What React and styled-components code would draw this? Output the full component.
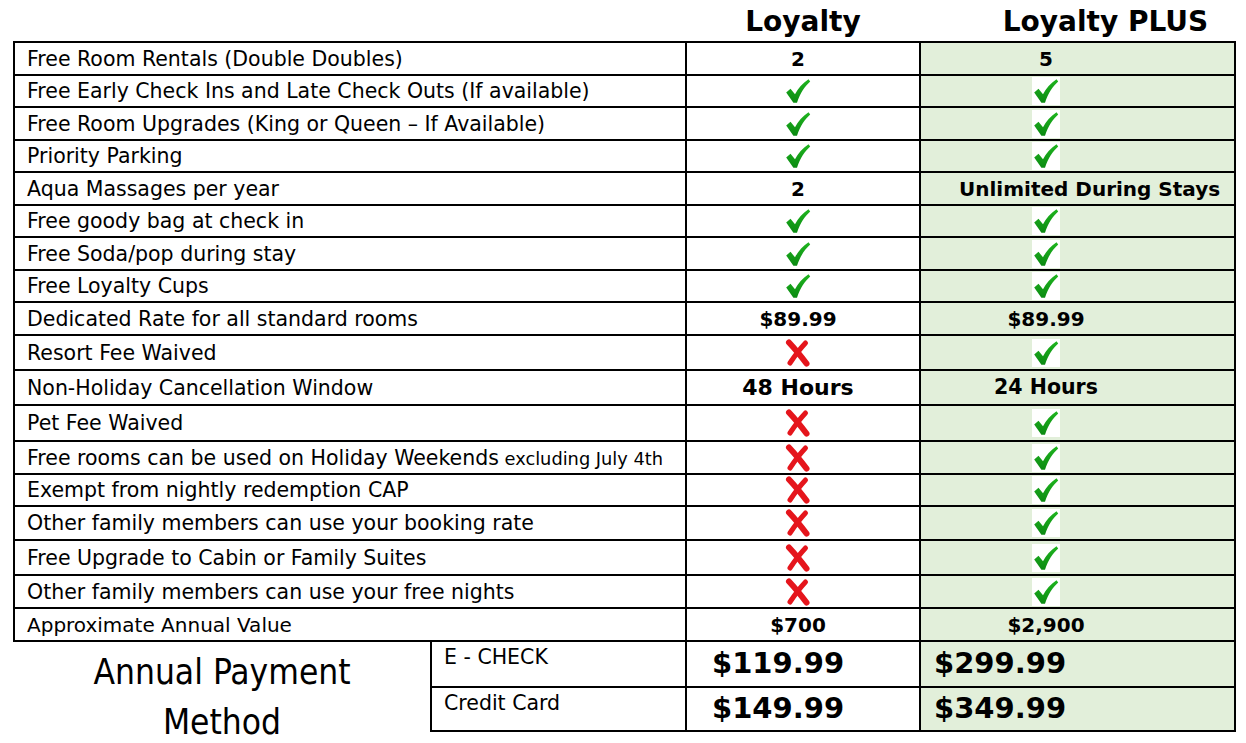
import React from 'react';
import styled, { createGlobalStyle } from 'styled-components';

const GlobalStyle = createGlobalStyle`
  html, body { margin: 0; padding: 0; background: #fff; }
  body {
    font-family: "DejaVu Sans", "Liberation Sans", sans-serif;
    color: #000;
  }
`;

const Page = styled.div`
  width: 1246px;
  height: 743px;
  overflow: hidden;
  padding-left: 13px;
  box-sizing: border-box;
`;

const Table = styled.table`
  border-collapse: collapse;
  table-layout: fixed;
  width: 1222px;
`;

const Row = styled.tr`
  height: ${(p) => p.$h}px;
`;

const HeadBlank = styled.th`
  border: none;
  padding: 0;
`;

const HeadCell = styled.th`
  border: none;
  padding: 2px 0 0 ${(p) => p.$shift || 0}px;
  font-weight: bold;
  font-size: 28px;
  text-align: center;
  vertical-align: middle;
  line-height: 1;
  white-space: nowrap;
`;

const Label = styled.td`
  border: 2px solid #000;
  padding: 0 0 0 12px;
  font-size: ${(p) => p.$size || 20.5}px;
  white-space: nowrap;
  vertical-align: middle;
  overflow: hidden;
`;

const Small = styled.span`
  font-size: 17.8px;
`;

const Value = styled.td`
  border: 2px solid #000;
  background: ${(p) => (p.$plus ? '#e2efda' : '#fff')};
  padding: ${(p) => p.$pad};
  text-align: ${(p) => p.$align || 'center'};
  vertical-align: middle;
  font-weight: bold;
  font-size: ${(p) => p.$size || 20}px;
  white-space: nowrap;
  line-height: 1;
`;

const IconBox = styled.span`
  display: inline-flex;
  align-items: center;
  justify-content: center;
  width: 28px;
  height: 28px;
  background: ${(p) => (p.$boxed ? '#fff' : 'transparent')};
  vertical-align: middle;
`;

const PaymentTitle = styled.td`
  border: none;
  padding: 0;
  vertical-align: top;
`;

const TitleText = styled.div`
  height: 89px;
  padding-top: 5px;
  box-sizing: border-box;
  font-family: "DejaVu Sans Condensed", "DejaVu Sans", sans-serif;
  font-size: 35px;
  line-height: 50px;
  text-align: center;
  white-space: nowrap;
  overflow: visible;
`;

const PayLabel = styled.td`
  border: 2px solid #000;
  padding: 4px 0 0 12px;
  vertical-align: top;
  font-size: 20.5px;
  line-height: 1.1;
  white-space: nowrap;
`;

const Price = styled.td`
  border: 2px solid #000;
  background: ${(p) => (p.$plus ? '#e2efda' : '#fff')};
  padding-left: ${(p) => p.$left}px;
  vertical-align: middle;
  font-weight: bold;
  font-size: 29px;
  line-height: 1;
  white-space: nowrap;
`;

const Check = () => (
  <svg width="26" height="26" viewBox="0 0 26 26">
    <defs>
      <linearGradient id="chkGrad" x1="0" y1="0" x2="0" y2="1">
        <stop offset="0" stopColor="#1fb51f" />
        <stop offset="1" stopColor="#0b8a12" />
      </linearGradient>
    </defs>
    <path
      d="M1.2 14.5 L5.5 10.8 L10 16.3 C13 10.3 17.5 5.3 23.5 1.2 L25.2 3.6 C19.8 8.6 15.2 15 12 24.8 L8.4 24.8 Z"
      fill="url(#chkGrad)"
    />
  </svg>
);

const Cross = () => (
  <svg width="28" height="28" viewBox="0 0 28 28">
    <path d="M5 3.5 Q 13 12 22.5 24.5" stroke="#e5151c" strokeWidth="6" strokeLinecap="round" fill="none" />
    <path d="M21.5 4 Q 14 12 6 24" stroke="#e5151c" strokeWidth="5" strokeLinecap="round" fill="none" />
  </svg>
);

const LOY_PAD = '0 10px 0 0';
const PLUS_PAD = '0 63px 0 0';

const rows = [
  { h: 33, label: 'Free Room Rentals (Double Doubles)', a: '2', b: '5' },
  { h: 32, label: 'Free Early Check Ins and Late Check Outs (If available)', a: 'check', b: 'check' },
  { h: 33, label: 'Free Room Upgrades (King or Queen \u2013 If Available)', a: 'check', b: 'check' },
  { h: 32, label: 'Priority Parking', a: 'check', b: 'check' },
  { h: 33, label: 'Aqua Massages per year', a: '2', b: 'Unlimited During Stays', bWide: true },
  { h: 32, label: 'Free goody bag at check in', a: 'check', b: 'check' },
  { h: 33, label: 'Free Soda/pop during stay', a: 'check', b: 'check' },
  { h: 32, label: 'Free Loyalty Cups', a: 'check', b: 'check' },
  { h: 33, label: 'Dedicated Rate for all standard rooms', a: '$89.99', b: '$89.99' },
  { h: 35, label: 'Resort Fee Waived', a: 'cross', b: 'check' },
  { h: 35, label: 'Non-Holiday Cancellation Window', a: '48 Hours', aSize: 22, b: '24 Hours', bSize: 20.5 },
  { h: 36, label: 'Pet Fee Waived', a: 'cross', b: 'check' },
  { h: 33, label: 'Free rooms can be used on Holiday Weekends', small: ' excluding July 4th', a: 'cross', b: 'check' },
  { h: 32, label: 'Exempt from nightly redemption CAP', a: 'cross', b: 'check' },
  { h: 34, label: 'Other family members can use your booking rate', a: 'cross', b: 'check' },
  { h: 35, label: 'Free Upgrade to Cabin or Family Suites', a: 'cross', b: 'check' },
  { h: 33, label: 'Other family members can use your free nights', a: 'cross', b: 'check' },
  { h: 33, label: 'Approximate Annual Value', size: 20, a: '$700', aSize: 20, b: '$2,900', bSize: 20 },
];

const renderContent = (v, plus) => {
  if (v === 'check')
    return (
      <IconBox $boxed={plus}>
        <Check />
      </IconBox>
    );
  if (v === 'cross')
    return (
      <IconBox>
        <Cross />
      </IconBox>
    );
  return v;
};

export default function App() {
  return (
    <>
      <GlobalStyle />
      <Page>
        <Table>
          <colgroup>
            <col style={{ width: 417 }} />
            <col style={{ width: 255 }} />
            <col style={{ width: 234 }} />
            <col style={{ width: 315 }} />
          </colgroup>
          <tbody>
            <Row $h={42}>
              <HeadBlank colSpan={2} />
              <HeadCell>Loyalty</HeadCell>
              <HeadCell $shift={56}>Loyalty PLUS</HeadCell>
            </Row>
            {rows.map((r) => (
              <Row key={r.label} $h={r.h}>
                <Label colSpan={2} $size={r.size}>
                  {r.label}
                  {r.small && <Small>{r.small}</Small>}
                </Label>
                <Value $pad={LOY_PAD} $size={r.aSize}>
                  {renderContent(r.a, false)}
                </Value>
                <Value
                  $plus
                  $pad={r.bWide ? '0 0 0 38px' : PLUS_PAD}
                  $align={r.bWide ? 'left' : 'center'}
                  $size={r.bSize}
                >
                  {renderContent(r.b, true)}
                </Value>
              </Row>
            ))}
            <Row $h={45}>
              <PaymentTitle rowSpan={2}>
                <TitleText>
                  Annual Payment
                  <br />
                  Method
                </TitleText>
              </PaymentTitle>
              <PayLabel>E - CHECK</PayLabel>
              <Price $left={25}>$119.99</Price>
              <Price $plus $left={13}>$299.99</Price>
            </Row>
            <Row $h={44}>
              <PayLabel>Credit Card</PayLabel>
              <Price $left={25}>$149.99</Price>
              <Price $plus $left={13}>$349.99</Price>
            </Row>
          </tbody>
        </Table>
      </Page>
    </>
  );
}
